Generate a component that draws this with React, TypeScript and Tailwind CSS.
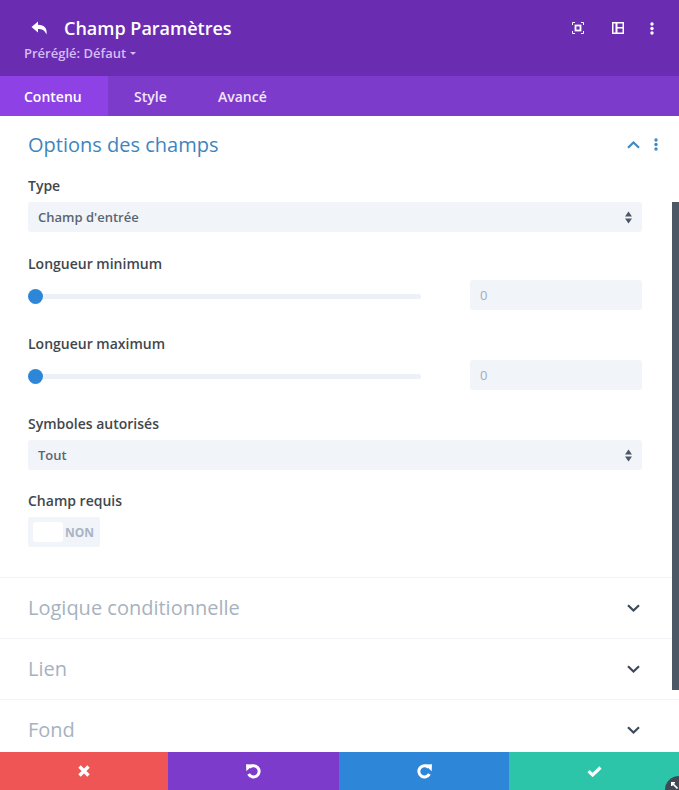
import React from "react";

const Updown = () => (
  <svg width="7" height="13" viewBox="0 0 7 13" className="fill-[#4c5866]">
    <path d="M3.5 0.5 L7 5.5 H0 Z" />
    <path d="M0 7.5 H7 L3.5 12.5 Z" />
  </svg>
);

const Dots = ({ className }: { className: string }) => (
  <svg width="4" height="13" viewBox="0 0 4 13" className={className}>
    <circle cx="2" cy="2" r="1.7" />
    <circle cx="2" cy="6.5" r="1.7" />
    <circle cx="2" cy="11" r="1.7" />
  </svg>
);

const Chevron = ({ up }: { up?: boolean }) => (
  <svg width="13" height="8" viewBox="0 0 13 8" fill="none" strokeWidth="2.2" className={up ? "stroke-[#3e8ac9]" : "stroke-[#3e4a59]"}>
    <path d={up ? "M1 6.8 L6.5 1.5 L12 6.8" : "M1 1.2 L6.5 6.5 L12 1.2"} />
  </svg>
);

const Select = ({ value }: { value: string }) => (
  <div className="h-[30px] w-[614px] rounded-[3px] bg-[#f1f4f9] flex items-center justify-between pl-[10px] pr-[10px] text-[13px] font-semibold text-[#5a6572]">
    <span className="mt-[2px]">{value}</span>
    <Updown />
  </div>
);

const Slider = () => (
  <div className="flex items-center justify-between w-[614px] h-[30px]">
    <div className="relative mt-[2px] w-[393px] h-[5px] rounded-full bg-[#ecf0f7]">
      <div className="absolute left-0 top-[-5px] w-[15px] h-[15px] rounded-full bg-[#2e86d8]" />
    </div>
    <div className="w-[172px] h-[30px] rounded-[3px] bg-[#f1f4f9] flex items-center pl-[10px] pt-[2px] text-[13px] font-medium text-[#a3adbb]">0</div>
  </div>
);

const Label = ({ children }: { children: React.ReactNode }) => (
  <div className="h-[16px] flex items-center text-[14px] font-semibold text-[#41474d] leading-none">{children}</div>
);

const Section = ({ title }: { title: string }) => (
  <div className="h-[61px] border-t border-[#f1f3f6] flex items-center justify-between pl-[28px] pr-[39px] shrink-0">
    <span className="text-[20px] text-[#a7b2c0] leading-none">{title}</span>
    <Chevron />
  </div>
);

export default function App() {
  return (
    <div className="relative w-[679px] h-[790px] overflow-hidden bg-white font-['Open_Sans',sans-serif] flex flex-col">
      <header className="h-[76px] shrink-0 bg-[#6a2db2] relative">
        <div className="flex items-center h-[20px] mt-[18px] pl-[31px] pr-[25px] absolute inset-x-0 top-0">
          <svg width="17" height="14" viewBox="0 0 17 14" className="fill-white">
            <path d="M7 0.5 L0.5 6 L7 11.5 V8 C11 8 13.5 9 15.5 13.5 C16.5 7.5 13.5 4 7 3.8 Z" />
          </svg>
          <span className="ml-[16px] text-[18px] font-semibold text-white leading-none">Champ Paramètres</span>
          <div className="ml-auto flex items-center">
            <svg width="12" height="12" viewBox="0 0 12 12" fill="none" className="stroke-white">
              <path d="M0.5 3 V0.5 H3 M9 0.5 H11.5 V3 M11.5 9 V11.5 H9 M3 11.5 H0.5 V9" />
              <rect x="3.5" y="3.5" width="5" height="5" strokeWidth="1.8" />
            </svg>
            <svg width="12" height="12" viewBox="0 0 12 12" className="fill-white ml-[28px]">
              <path fillRule="evenodd" d="M0 0 H12 V12 H0 Z M1.5 1.5 V10.5 H3.5 V1.5 Z M5.5 1.5 V5 H10.5 V1.5 Z M5.5 6.5 V10.5 H10.5 V6.5 Z" />
            </svg>
            <Dots className="fill-white ml-[26px]" />
          </div>
        </div>
        <div className="absolute left-[24px] top-[45px] flex items-center text-[13px] font-semibold text-[#d5bdf4] leading-[16px]">
          Préréglé: Défaut
          <svg width="6" height="3" viewBox="0 0 6 3" className="ml-[4px] mt-[1px] fill-[#d5bdf4]"><path d="M0 0 H6 L3 3 Z" /></svg>
        </div>
      </header>

      <nav className="h-[40px] shrink-0 bg-[#7c3bcb] flex text-[14px] font-semibold text-[#f0e6fb]">
        <div className="w-[108px] bg-[#8e42e6] flex items-center pl-[24px] text-white">Contenu</div>
        <div className="w-[86px] flex items-center pl-[26px]">Style</div>
        <div className="flex items-center pl-[24px]">Avancé</div>
      </nav>

      <main className="flex-1 min-h-0 overflow-hidden flex flex-col">
        <div className="h-[461px] shrink-0 pl-[28px]">
          <div className="h-[58px] flex items-center justify-between pr-[21px] pb-[1px]">
            <span className="text-[20px] text-[#3e85bd] leading-none">Options des champs</span>
            <div className="flex items-center">
              <Chevron up />
              <Dots className="fill-[#3e8ac9] ml-[14px]" />
            </div>
          </div>
          <div className="mt-[4px]"><Label>Type</Label></div>
          <div className="mt-[8px]"><Select value="Champ d'entrée" /></div>
          <div className="mt-[24px]"><Label>Longueur minimum</Label></div>
          <div className="mt-[8px]"><Slider /></div>
          <div className="mt-[26px]"><Label>Longueur maximum</Label></div>
          <div className="mt-[8px]"><Slider /></div>
          <div className="mt-[26px]"><Label>Symboles autorisés</Label></div>
          <div className="mt-[8px]"><Select value="Tout" /></div>
          <div className="mt-[23px]"><Label>Champ requis</Label></div>
          <div className="mt-[8px] w-[72px] h-[30px] rounded-[3px] bg-[#f1f4f9] flex items-center pl-[5px]">
            <div className="w-[30px] h-[20px] rounded-[3px] bg-white" />
            <span className="ml-[2px] mt-[2px] text-[12px] font-bold text-[#a9b5c4]">NON</span>
          </div>
        </div>
        <Section title="Logique conditionnelle" />
        <Section title="Lien" />
        <Section title="Fond" />
      </main>

      <footer className="h-[38px] shrink-0 flex">
        <div className="w-[168px] bg-[#ef5555] flex items-center justify-center">
          <svg width="12" height="12" viewBox="0 0 12 12" className="stroke-white" strokeWidth="3.4"><path d="M1.5 1.5 L10.5 10.5 M10.5 1.5 L1.5 10.5" /></svg>
        </div>
        <div className="w-[171px] bg-[#7d3bcb] flex items-center justify-center">
          <svg width="15" height="15" viewBox="0 0 15 15" fill="none" className="stroke-white" strokeWidth="3">
            <path d="M3.5 3.5 A5.6 5.6 0 1 1 2.6 10" />
            <path d="M0 0.3 L7.2 0.5 L0.4 7.2 Z" className="fill-white" strokeWidth="0" />
          </svg>
        </div>
        <div className="w-[170px] bg-[#2e86d8] flex items-center justify-center">
          <svg width="15" height="15" viewBox="0 0 15 15" fill="none" className="stroke-white" strokeWidth="3">
            <path d="M11.5 3.5 A5.6 5.6 0 1 0 12.4 10" />
            <path d="M15 0.3 L7.8 0.5 L14.6 7.2 Z" className="fill-white" strokeWidth="0" />
          </svg>
        </div>
        <div className="flex-1 bg-[#2cc5a9] flex items-center justify-center">
          <svg width="15" height="11" viewBox="0 0 15 11" fill="none" className="stroke-white" strokeWidth="3.2"><path d="M1.5 5.2 L5.6 9 L13.5 1.5" /></svg>
        </div>
      </footer>

      <div className="absolute right-0 top-[202px] w-[7px] h-[488px] bg-[#4c5866]" />
      <div className="absolute right-[-14px] bottom-[-14px] w-[28px] h-[28px] rounded-full bg-[#3f4a56] flex items-start justify-start p-[6px]">
        <svg width="7" height="7" viewBox="0 0 7 7" fill="none" className="stroke-white" strokeWidth="1.6"><path d="M0.8 0.8 L6.5 6.5 M0.8 4 V0.8 H4" /></svg>
      </div>
    </div>
  );
}
